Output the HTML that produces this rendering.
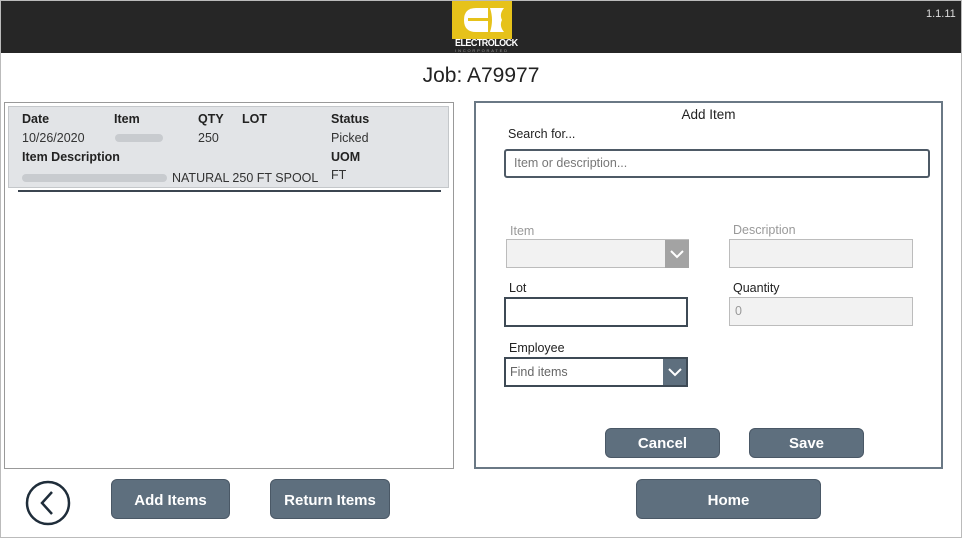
<!DOCTYPE html>
<html><head><meta charset="utf-8"><style>
*{margin:0;padding:0;box-sizing:border-box}
body{width:962px;height:538px;background:#fff;font-family:"Liberation Sans",sans-serif;position:relative;overflow:hidden;color:#222}
.abs{position:absolute}
.frame{left:0;top:0;width:962px;height:538px;border:1px solid #bbb}
.top{left:1px;top:1px;width:960px;height:52px;background:#262626}
.btn{position:absolute;background:#5e6f7e;border:1px solid #4a5866;border-radius:6px;color:#fff;font-weight:bold;font-size:15px;text-align:center}
.lbl{position:absolute;font-size:12.5px}
.inp{position:absolute;border:1px solid #bcbcbc;background:#f2f2f2}
.b{font-weight:bold;font-size:12.5px}
.t{font-size:12.5px;color:#333}
</style></head><body>
<div class="abs frame"></div>
<div class="abs top"></div>
<div class="abs" style="left:452px;top:1px;width:60px;height:38px;background:#e6c21a"></div>
<svg class="abs" style="left:452px;top:1px" width="60" height="38">
<path d="M36 7 L24 7 Q12 7 12 19 Q12 31 24 31 L36 31 Z" fill="#fff"/>
<rect x="16" y="17" width="20" height="3" fill="#e6c21a"/>
<path d="M38 7 L52 7 Q47 13 50 19 Q47 25 52 31 L38 31 Q42 19 38 7Z" fill="#fff"/>
</svg>
<div class="abs" style="left:452px;top:38px;width:60px;text-align:center;color:#fff;font-size:10px;font-weight:bold;letter-spacing:-0.6px;transform:scaleX(0.9)">ELECTROLOCK</div>
<div class="abs" style="left:452px;top:48px;width:60px;text-align:center;color:#999;font-size:4px;letter-spacing:1.8px">INCORPORATED</div>
<div class="abs" style="left:926px;top:8px;color:#ddd;font-size:11px">1.1.11</div>
<div class="abs" style="left:0;width:962px;top:64px;text-align:center;font-size:21px;color:#222">Job: A79977</div>

<div class="abs" style="left:4px;top:102px;width:450px;height:367px;border:1px solid #999"></div>
<div class="abs" style="left:8px;top:106px;width:441px;height:82px;background:#e2e4e7;border:1px solid #c4c7ca"></div>
<div class="abs b" style="left:22px;top:112px">Date</div>
<div class="abs b" style="left:114px;top:112px">Item</div>
<div class="abs b" style="left:198px;top:112px">QTY</div>
<div class="abs b" style="left:242px;top:112px">LOT</div>
<div class="abs b" style="left:331px;top:112px">Status</div>
<div class="abs t" style="left:22px;top:131px">10/26/2020</div>
<div class="abs" style="left:115px;top:134px;width:48px;height:8px;background:#c8cbcf;border-radius:4px"></div>
<div class="abs t" style="left:198px;top:131px">250</div>
<div class="abs t" style="left:331px;top:131px">Picked</div>
<div class="abs b" style="left:22px;top:150px">Item Description</div>
<div class="abs b" style="left:331px;top:150px">UOM</div>
<div class="abs" style="left:22px;top:174px;width:145px;height:8px;background:#c8cbcf;border-radius:4px"></div>
<div class="abs t" style="left:172px;top:171px">NATURAL 250 FT SPOOL</div>
<div class="abs t" style="left:331px;top:168px">FT</div>
<div class="abs" style="left:18px;top:190px;width:423px;height:2px;background:#3b4550"></div>

<div class="abs" style="left:474px;top:101px;width:469px;height:368px;border:2px solid #6a7885"></div>
<div class="abs" style="left:474px;width:469px;top:107px;text-align:center;font-size:13.5px">Add Item</div>
<div class="lbl" style="left:508px;top:127px">Search for...</div>
<div class="abs" style="left:504px;top:149px;width:426px;height:29px;border:2px solid #4e5a66;border-radius:3px;font-size:12.5px;color:#777;padding:5px 8px">Item or description...</div>

<div class="lbl" style="left:510px;top:224px;color:#999">Item</div>
<div class="inp" style="left:506px;top:239px;width:183px;height:29px"></div>
<div class="abs" style="left:665px;top:240px;width:24px;height:28px;background:#a3a3a3"></div>
<svg class="abs" style="left:669px;top:248px" width="16" height="12"><path d="M2 3 L8 9 L14 3" stroke="#fff" stroke-width="2" fill="none"/></svg>
<div class="lbl" style="left:733px;top:223px;color:#999">Description</div>
<div class="inp" style="left:729px;top:239px;width:184px;height:29px"></div>

<div class="lbl" style="left:509px;top:281px">Lot</div>
<div class="abs" style="left:504px;top:297px;width:184px;height:30px;border:2px solid #3e4a55;background:#fff"></div>
<div class="lbl" style="left:733px;top:281px">Quantity</div>
<div class="inp" style="left:729px;top:297px;width:184px;height:29px;font-size:12.5px;color:#999;padding:6px 5px">0</div>

<div class="lbl" style="left:509px;top:341px">Employee</div>
<div class="abs" style="left:504px;top:357px;width:184px;height:30px;border:2px solid #3e4a55;background:#fff;font-size:12.5px;color:#666;padding:6px 4px">Find items</div>
<div class="abs" style="left:663px;top:359px;width:23px;height:26px;background:#5e6f7e"></div>
<svg class="abs" style="left:667px;top:366px" width="16" height="12"><path d="M2 3 L8 9 L14 3" stroke="#fff" stroke-width="2" fill="none"/></svg>

<div class="btn" style="left:605px;top:428px;width:115px;height:30px;line-height:30px">Cancel</div>
<div class="btn" style="left:749px;top:428px;width:115px;height:30px;line-height:30px">Save</div>

<svg class="abs" style="left:25px;top:480px" width="46" height="46"><circle cx="23" cy="23" r="21" stroke="#1f2d3a" stroke-width="2.5" fill="none"/><path d="M27 12 L17 23 L27 34" stroke="#1f2d3a" stroke-width="2.5" fill="none"/></svg>
<div class="btn" style="left:111px;top:479px;width:119px;height:40px;line-height:41px">Add Items</div>
<div class="btn" style="left:270px;top:479px;width:120px;height:40px;line-height:41px">Return Items</div>
<div class="btn" style="left:636px;top:479px;width:185px;height:40px;line-height:41px">Home</div>
</body></html>
